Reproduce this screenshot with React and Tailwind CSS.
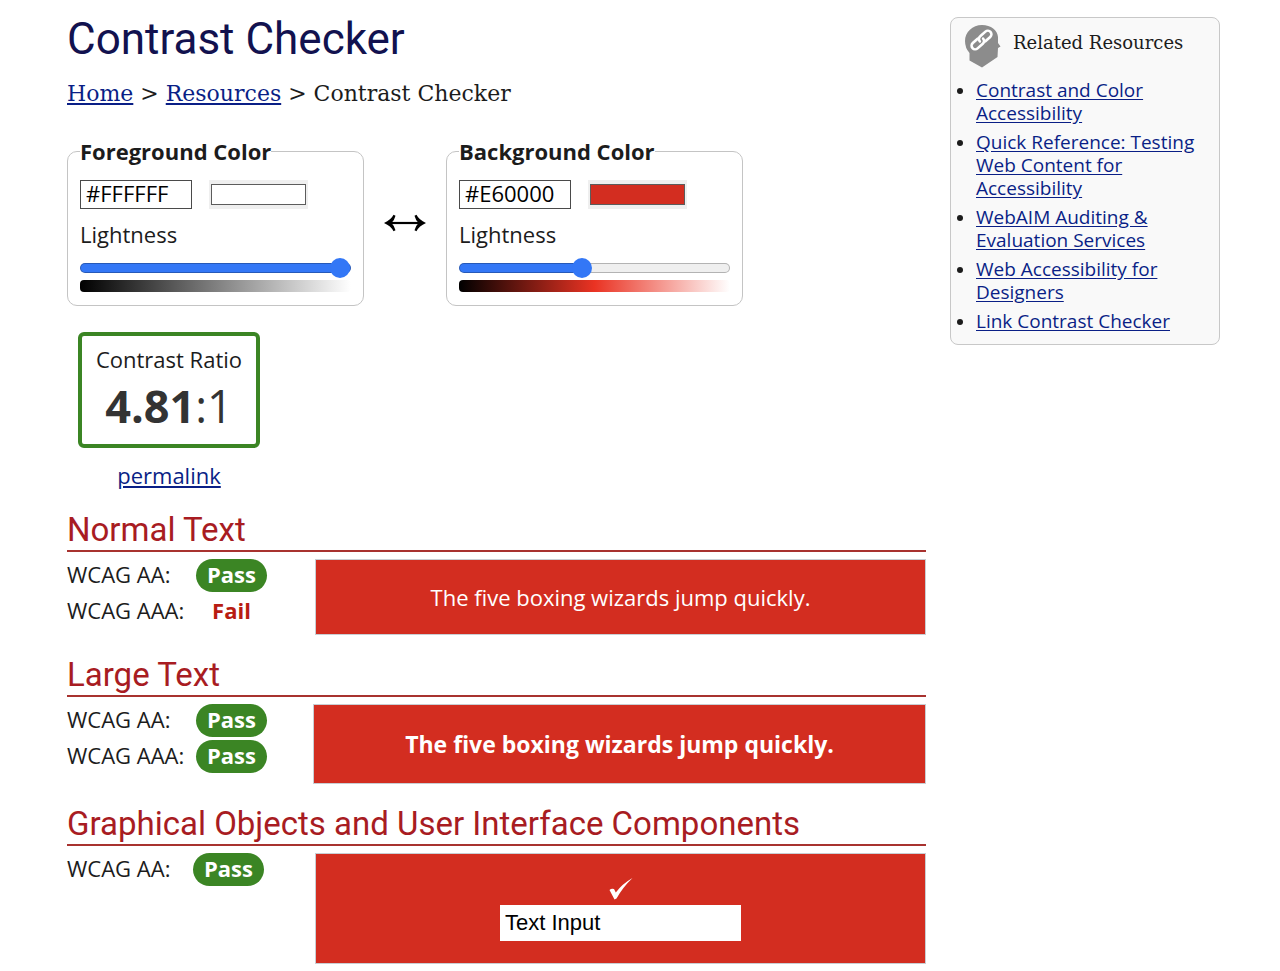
import { useState } from "react";

const resources = [
  "Contrast and Color Accessibility",
  "Quick Reference: Testing Web Content for Accessibility",
  "WebAIM Auditing & Evaluation Services",
  "Web Accessibility for Designers",
  "Link Contrast Checker",
];

const link = "text-[#0a1f86] underline underline-offset-2";

function ColorPanel({ id, title, hex, swatch, lightness, gradient }) {
  const [value, setValue] = useState(lightness);
  const fill = `linear-gradient(to right, #3377f6 ${value}%, #efefef ${value}%)`;
  return (
    <fieldset className="w-[297px] rounded-[10px] border border-[#c4c4c4] px-3 pb-[13px]">
      <legend className="h-8 leading-8 font-bold">{title}</legend>
      <div className="mt-[13px] flex gap-[17px]">
        <input
          type="text"
          aria-label={`${title} hex value`}
          defaultValue={hex}
          className="h-[29px] w-[112px] border border-[#4a4a4a] px-[5px] pb-1 text-black"
        />
        <input
          type="color"
          aria-label={`${title} picker`}
          defaultValue={swatch}
          className="h-[29px] w-[99px] appearance-none bg-[#efefef] px-0.5 py-1 [&::-webkit-color-swatch]:rounded-none [&::-webkit-color-swatch]:border [&::-webkit-color-swatch]:border-[#5c5c5c] [&::-webkit-color-swatch-wrapper]:p-0"
        />
      </div>
      <label htmlFor={id} className="mt-[10px] block leading-[30px]">
        Lightness
      </label>
      <input
        id={id}
        type="range"
        min="0"
        max="100"
        value={value}
        onChange={(e) => setValue(Number(e.target.value))}
        style={{ "--fill": fill }}
        className="mt-[9px] block h-5 w-full appearance-none bg-transparent [&::-webkit-slider-runnable-track]:h-[10px] [&::-webkit-slider-runnable-track]:rounded-full [&::-webkit-slider-runnable-track]:border [&::-webkit-slider-runnable-track]:border-black/25 [&::-webkit-slider-runnable-track]:bg-(image:--fill) [&::-webkit-slider-runnable-track]:bg-origin-border [&::-webkit-slider-thumb]:-mt-1.5 [&::-webkit-slider-thumb]:size-5 [&::-webkit-slider-thumb]:appearance-none [&::-webkit-slider-thumb]:rounded-full [&::-webkit-slider-thumb]:bg-[#3377f6]"
      />
      <div className={`mt-0.5 h-3 rounded ${gradient}`} />
    </fieldset>
  );
}

function Result({ level, pass, narrow }) {
  return (
    <div className="flex h-[33px] items-center">
      <dt className={`pb-[3px] ${narrow ? "w-[126px]" : "w-[129px]"}`}>{level}:</dt>
      <dd
        className={
          pass
            ? "h-[33px] w-[71px] rounded-full bg-[#3b8524] text-center font-bold text-white"
            : "h-[33px] w-[71px] text-center font-bold text-[#b81c12]"
        }
      >
        {pass ? "Pass" : "Fail"}
      </dd>
    </div>
  );
}

function Section({ title, results, narrow, wide, children }) {
  return (
    <section>
      <h2 className="border-b-2 border-[#a8322f] font-[Roboto,sans-serif] text-[33px] leading-10 text-[#a81c22]">
        {title}
      </h2>
      <div className={`mt-[7px] grid items-start ${wide ? "grid-cols-[246px_1fr]" : "grid-cols-[248px_1fr]"}`}>
        <dl className="flex flex-col gap-[3px]">
          {results.map(([level, pass]) => (
            <Result key={level} level={level} pass={pass} narrow={narrow} />
          ))}
        </dl>
        {children}
      </div>
    </section>
  );
}

function HeadIcon() {
  return (
    <svg viewBox="0 0 36 43" className="h-[43px] w-9" aria-hidden="true">
      <path
        d="M17 0C26 0 32.500 5 33 12V18L35.500 21.500L33 23L32.500 32L17 42.500L4.500 35.500V28Q0 23 0 16C0 7 7.500 0 17 0Z"
        fill="#8c8c8c"
      />
      <g
        transform="translate(16.500 15) rotate(-42)"
        fill="none"
        stroke="#fff"
        strokeWidth="2.600"
        strokeLinecap="round"
        strokeLinejoin="round"
      >
        <path d="M-2 -3.600H-8.500A3.600 3.600 0 0 0 -8.500 3.600H-1.500A3.600 3.600 0 0 0 2.200 0" />
        <path d="M2 3.600H8.500A3.600 3.600 0 0 0 8.500 -3.600H1.500A3.600 3.600 0 0 0 -2.200 0" />
      </g>
    </svg>
  );
}

const slab = "font-['DejaVu_Serif',serif]";

export default function App() {
  return (
    <div className="flex items-start gap-6 bg-white pr-[60px] pl-[67px] font-['Open_Sans',sans-serif] text-[22px] leading-[30px] text-[#1c1c1c]">
      <main className="min-w-0 flex-1 pt-[13px] pb-2">
        <h1 className="font-[Roboto,sans-serif] text-[44px] leading-[52px] text-[#12124f]">Contrast Checker</h1>
        <nav aria-label="Breadcrumb" className={`mt-[15px] text-[22px] leading-7 ${slab}`}>
          <a href="#home" className={link}>Home</a> &gt;{" "}
          <a href="#resources" className={link}>Resources</a> &gt; Contrast Checker
        </nav>

        <div className="mt-[27px] flex items-center">
          <ColorPanel
            id="fg-lightness"
            title="Foreground Color"
            hex="#FFFFFF"
            swatch="#ffffff"
            lightness={100}
            gradient="bg-linear-to-r/srgb from-black to-white"
          />
          <button type="button" aria-label="Swap colors" className="flex w-[82px] justify-center pt-1">
            <svg viewBox="0 0 42 18" className="h-[18px] w-[42px]" aria-hidden="true">
              <path d="M5 9H37" stroke="#000" strokeWidth="2.200" />
              <path d="M0 9Q7 6 9.500 .8L11.500 1.800Q10.500 6 7.500 9Q10.500 12 11.500 16.200L9.500 17.200Q7 12 0 9Z" />
              <path d="M42 9Q35 6 32.500 .8L30.500 1.800Q31.500 6 34.500 9Q31.500 12 30.500 16.200L32.500 17.200Q35 12 42 9Z" />
            </svg>
          </button>
          <ColorPanel
            id="bg-lightness"
            title="Background Color"
            hex="#E60000"
            swatch="#d32d20"
            lightness={45}
            gradient="bg-linear-to-r/srgb from-black via-[#ea3323] to-white"
          />
        </div>

        <div className="mt-[26px] ml-[11px] w-[182px] text-center">
          <div className="rounded-md border-4 border-[#3b8524] pt-2 pb-1.5">
            <div>Contrast Ratio</div>
            <div className="text-[45px] leading-[64px] text-[#333]">
              <b>4.81</b>:1
            </div>
          </div>
          <a href="#permalink" className={`mt-3 inline-block ${link}`}>permalink</a>
        </div>

        <div className="mt-5 flex flex-col gap-5">
          <Section title="Normal Text" results={[["WCAG AA", true], ["WCAG AAA", false]]}>
            <p className="border border-[#c9ced3] bg-[#d32d20] py-[22px] text-center text-white">
              The five boxing wizards jump quickly.
            </p>
          </Section>
          <Section title="Large Text" wide results={[["WCAG AA", true], ["WCAG AAA", true]]}>
            <p className="border border-[#c9ced3] bg-[#d32d20] py-6 text-center text-[23px] font-bold text-white">
              The five boxing wizards jump quickly.
            </p>
          </Section>
          <Section title="Graphical Objects and User Interface Components" narrow results={[["WCAG AA", true]]}>
            <div className="flex flex-col items-center border border-[#c9ced3] bg-[#d32d20] pt-6 pb-[22px]">
              <svg viewBox="0 0 24 22" className="h-[22px] w-6" role="img" aria-label="Check mark">
                <path d="M0.500 12Q2.500 10 5 11L6.800 14.500Q13 6 23.500 0Q14 9 7.500 20.500L5.500 21.500Z" fill="#fff" />
              </svg>
              <input
                type="text"
                aria-label="Sample text input"
                defaultValue="Text Input"
                className="mt-[5px] h-9 w-[241px] bg-white px-[5px] font-['Liberation_Sans',sans-serif] text-black"
              />
            </div>
          </Section>
        </div>
      </main>

      <aside className="mt-[17px] w-[270px] rounded-lg border border-[#c8c8c8] bg-[#f9f9f9] px-3 pt-[7px] pb-[11px]">
        <div className="ml-0.5 flex items-start gap-3">
          <HeadIcon />
          <h2 className={`text-[18px] leading-9 ${slab}`}>Related Resources</h2>
        </div>
        <ul className="mt-[11px] ml-[13px] flex list-outside list-disc flex-col gap-1.5 text-[19px] leading-[23px]">
          {resources.map((name) => (
            <li key={name} className="marker:text-[17px]">
              <a href="#resource" className={link}>{name}</a>
            </li>
          ))}
        </ul>
      </aside>
    </div>
  );
}
